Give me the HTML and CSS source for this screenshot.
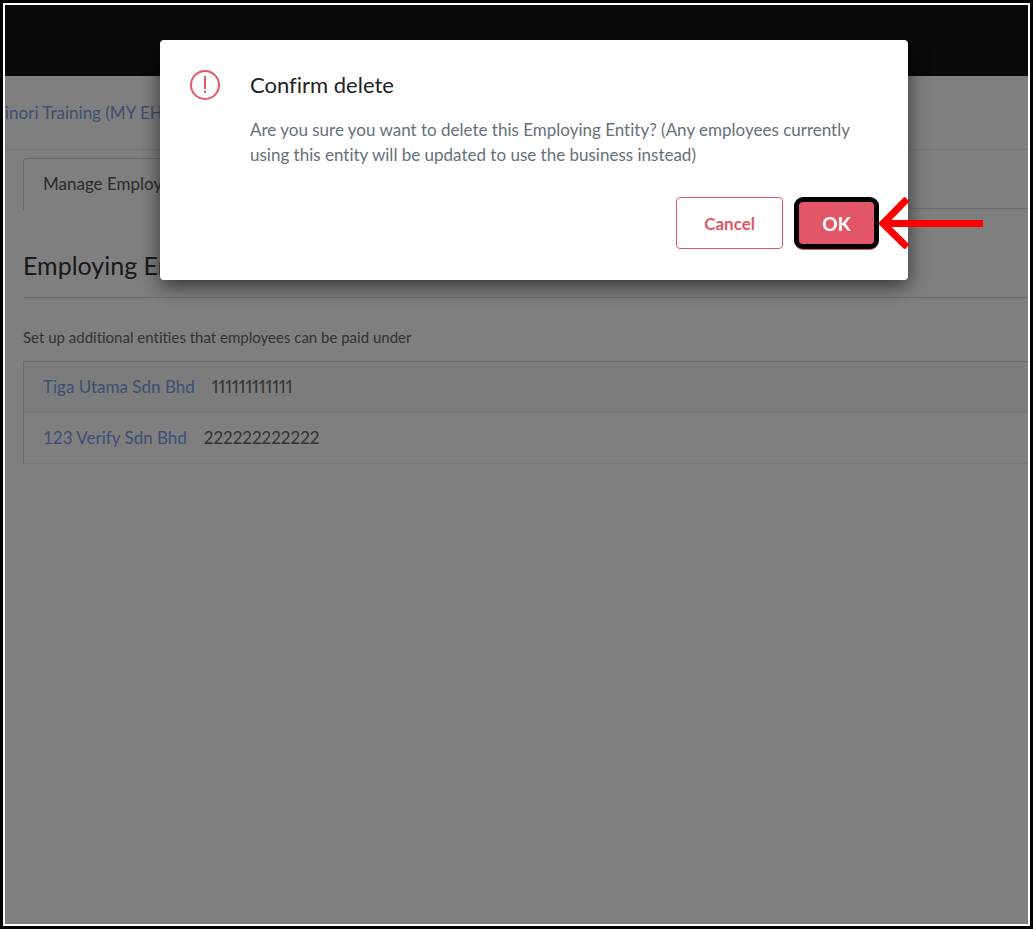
FILE: index.html
```
<!DOCTYPE html>
<html lang="en">
<head>
  <meta charset="UTF-8" />
  <meta name="viewport" content="width=device-width, initial-scale=1" />
  <title>Employing Entities</title>
  <link rel="stylesheet" href="styles.css">
</head>
<body>
<div class="frame">
  <header class="topbar"></header>
  <nav class="breadcrumb"><a href="#">inori Training (MY EH)</a></nav>
  <main>
    <div class="tabs"><a class="tab" href="#">Manage Employing Entities</a></div>
    <h1>Employing Entities</h1>
    <p class="intro">Set up additional entities that employees can be paid under</p>
    <ul class="entities">
      <li><a href="#">Tiga Utama Sdn Bhd</a><span>111111111111</span></li>
      <li><a href="#">123 Verify Sdn Bhd</a><span>222222222222</span></li>
    </ul>
  </main>

  <div class="overlay">
    <div class="dialog" role="alertdialog" aria-labelledby="dialog-title" aria-describedby="dialog-text">
      <svg class="alert-icon" viewBox="0 0 30 30" fill="none" stroke="#e35667" stroke-width="2">
        <circle cx="15" cy="15" r="14" />
        <path d="M15 6v13M15 21v2" />
      </svg>
      <div class="dialog-body">
        <h2 id="dialog-title">Confirm delete</h2>
        <p id="dialog-text">Are you sure you want to delete this Employing Entity? (Any employees currently using this entity will be updated to use the business instead)</p>
      </div>
      <div class="actions">
        <button class="cancel" type="button">Cancel</button>
        <div class="ok-wrap">
          <button class="ok" type="button">OK</button>
          <svg class="arrow" viewBox="0 0 104 52" fill="none" stroke="#f00">
            <path d="M104 26.500H5" stroke-width="7" />
            <path d="M28 2L4 26.500L28 50" stroke-width="7" />
          </svg>
        </div>
      </div>
    </div>
  </div>
</div>
</body>
</html>
```

FILE: styles.css
```
* {
  box-sizing: border-box;
}
body {
  margin: 0;
  font-family: Lato, "Open Sans", sans-serif;
  font-size: 17px;
  font-variant-ligatures: none;
  line-height: 25px;
  color: #666;
}
h1,
h2,
p,
ul {
  margin: 0;
  font-weight: 400;
}
a {
  color: #7c9cec;
  text-decoration: none;
}

.frame {
  position: relative;
  min-height: 100vh;
  border: 3px solid #000;
  outline: 2px solid #fff;
  outline-offset: -5px;
  padding: 2px;
  overflow: hidden;
}
.topbar {
  height: 71px;
  background-color: #151113;
}
.breadcrumb {
  height: 74px;
  padding-top: 24px;
  border-bottom: 1px solid #ededed;
}
main {
  padding: 8px 0 0 18px;
}

.tabs {
  display: flex;
  height: 51px;
  border-bottom: 1px solid #d8d8d8;
}
.tab {
  height: 52px;
  padding: 12px 19px;
  border: 1px solid #d8d8d8;
  border-bottom: 0;
  border-radius: 4px 4px 0 0;
  background-color: #fff;
  color: #555;
}
h1 {
  padding: 41px 0 16px;
  border-bottom: 1px solid #dcdcdc;
  color: #333;
  font-size: 25px;
  line-height: 31px;
}
.intro {
  padding: 27px 0 11px;
  font-size: 15px;
}
.entities {
  padding: 0;
  border-top: 1px solid #d8d8d8;
  border-left: 1px solid #d8d8d8;
  list-style: none;
}
.entities li {
  display: flex;
  gap: 17px;
  padding: 12px 19px 13px;
  border-bottom: 1px solid #f0f0f0;
}
.entities li:first-child {
  background-color: #f8f8f8;
}
.entities span {
  font-variant-numeric: proportional-nums;
}

.overlay {
  position: absolute;
  inset: 2px;
  padding: 35px 120px 0 155px;
  background-color: rgba(0, 0, 0, 0.5);
}
.dialog {
  display: grid;
  grid-template-columns: 30px 1fr;
  column-gap: 30px;
  padding: 30px 29px 31px 30px;
  border-radius: 4px;
  background-color: #fff;
  box-shadow: 0 6px 20px rgba(0, 0, 0, 0.6);
}
.alert-icon {
  width: 30px;
  height: 30px;
}
.dialog h2 {
  margin-bottom: 18px;
  color: #222;
  font-size: 22px;
  line-height: 29px;
}
.dialog p {
  color: #66707a;
}
.actions {
  grid-column: 1 / 3;
  display: flex;
  justify-content: flex-end;
  gap: 11px;
  margin-top: 30px;
}
button {
  height: 52px;
  font-family: inherit;
  font-weight: 700;
  cursor: pointer;
}
.cancel {
  padding: 1px 27px 0;
  border: 1px solid #e35667;
  border-radius: 4px;
  background-color: #fff;
  color: #e35667;
  font-size: 17px;
}
.ok-wrap {
  position: relative;
}
.ok {
  width: 85px;
  border: 5px solid #000;
  border-radius: 9px;
  background-color: #e35667;
  box-shadow: 0 1px #e35667;
  color: #fff;
  font-size: 19px;
}
/* pointer to the confirm button */
.arrow {
  position: absolute;
  top: 0;
  left: 100%;
  width: 104px;
  height: 52px;
}
```
